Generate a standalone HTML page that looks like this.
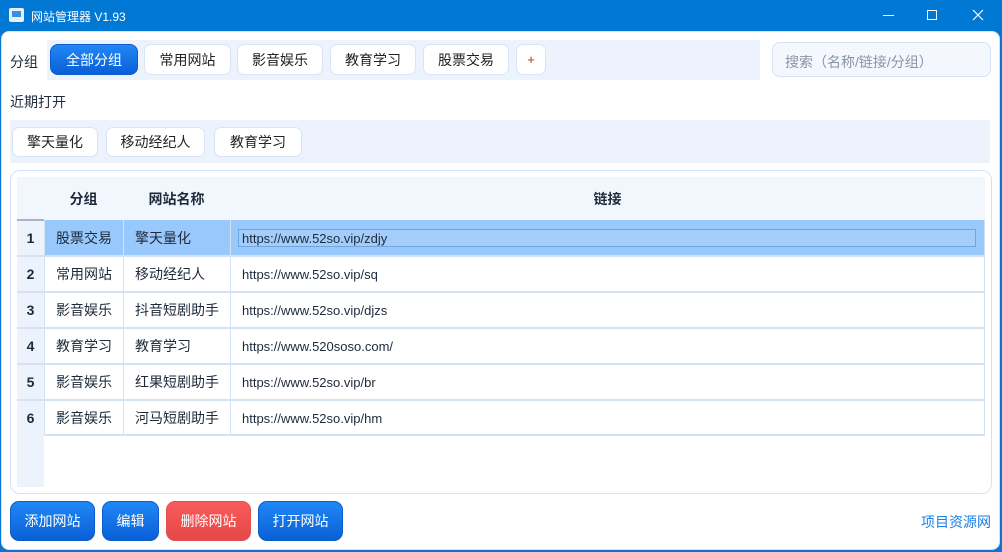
<!DOCTYPE html>
<html><head><meta charset="utf-8"><style>
*{box-sizing:border-box;margin:0;padding:0}
body{width:1002px;height:552px;background:#0b74d0;font-family:"Liberation Sans","Noto Sans CJK SC",sans-serif;font-size:14px;color:#1e2a3a;position:relative;overflow:hidden}
.abs{position:absolute}
.title{left:0;top:0;width:1002px;height:31px;background:#0078d4;color:#fff}
.main{left:1px;top:31px;width:999px;height:519px;background:#fff;border-radius:8px 8px 8px 8px;border:1px solid #d2e2f6}
.btn{position:absolute;background:#fff;border:1px solid #d8e4f4;border-radius:7px;display:flex;align-items:center;justify-content:center;font-size:14px;color:#222}
.strip{position:absolute;background:#edf3fc}
.pb{position:absolute;border-radius:9px;color:#fff;display:flex;align-items:center;justify-content:center;font-size:14px;background:linear-gradient(#2088f6,#0a5fd6);border:1px solid #0b5ccc}
.cell{position:absolute;display:flex;align-items:center;font-size:14px}
</style></head><body>
<div class="abs title">
 <div class="abs" style="left:9px;top:8px;width:15px;height:14px;background:#e8eef6;border-radius:2px"><div class="abs" style="left:3px;top:3px;width:9px;height:6px;background:#3a8ee0"></div></div>
 <div class="abs" style="left:31px;top:8px;font-size:12px">网站管理器 V1.93</div>
 <div class="abs" style="left:883px;top:15px;width:11px;height:1px;background:#fff"></div>
 <div class="abs" style="left:927px;top:10px;width:10px;height:10px;border:1px solid #fff"></div>
 <svg class="abs" style="left:972px;top:9px" width="12" height="12"><path d="M1 1L11 11M11 1L1 11" stroke="#fff" stroke-width="1.2"/></svg>
</div>
<div class="abs main"></div>
<div class="abs" style="left:10px;top:52px;font-size:14px">分组</div>
<div class="strip" style="left:47px;top:40px;width:713px;height:40px"></div>
<div class="pb" style="left:50px;top:44px;width:88px;height:31px;border-radius:8px">全部分组</div>
<div class="btn" style="left:144px;top:44px;width:87px;height:31px">常用网站</div>
<div class="btn" style="left:237px;top:44px;width:86px;height:31px">影音娱乐</div>
<div class="btn" style="left:330px;top:44px;width:86px;height:31px">教育学习</div>
<div class="btn" style="left:423px;top:44px;width:86px;height:31px">股票交易</div>
<div class="btn" style="left:516px;top:44px;width:30px;height:31px;font-size:13px;color:#b04000">+</div>
<div class="abs" style="left:772px;top:42px;width:219px;height:35px;background:#f4f8fe;border:1px solid #d4e2f4;border-radius:8px;color:#8a94a4;padding:9px 0 0 12px;font-size:14px">搜索（名称/链接/分组）</div>
<div class="abs" style="left:10px;top:92px;font-size:14px">近期打开</div>
<div class="strip" style="left:10px;top:120px;width:980px;height:43px"></div>
<div class="btn" style="left:12px;top:127px;width:86px;height:30px">擎天量化</div>
<div class="btn" style="left:106px;top:127px;width:99px;height:30px">移动经纪人</div>
<div class="btn" style="left:214px;top:127px;width:88px;height:30px">教育学习</div>
<div class="abs" style="left:10px;top:170px;width:982px;height:324px;border:1px solid #d2e2f6;border-radius:10px;background:#fff"></div>
<div class="abs" style="left:17px;top:177px;width:968px;height:43px;background:#f2f7fe"></div>
<div class="abs" style="left:17px;top:220px;width:27px;height:267px;background:#edf3fc"></div>
<div class="abs" style="left:17px;top:219px;width:27px;height:2px;background:#a8b4c4"></div>
<div class="cell" style="left:44px;top:177px;width:79px;height:43px;justify-content:center;font-weight:bold">分组</div>
<div class="cell" style="left:123px;top:177px;width:107px;height:43px;justify-content:center;font-weight:bold">网站名称</div>
<div class="cell" style="left:230px;top:177px;width:755px;height:43px;justify-content:center;font-weight:bold">链接</div>
<div class="pb" style="left:10px;top:501px;width:85px;height:40px">添加网站</div>
<div class="pb" style="left:102px;top:501px;width:57px;height:40px">编辑</div>
<div class="pb" style="left:166px;top:501px;width:85px;height:40px;background:linear-gradient(#fa5a5a,#e44848);border-color:#e25050">删除网站</div>
<div class="pb" style="left:258px;top:501px;width:85px;height:40px">打开网站</div>
<div class="abs" style="left:921px;top:512px;color:#1a7fe6;font-size:14px">项目资源网</div>
<div class="abs" style="left:44px;top:220px;width:941px;height:216px;border-bottom:2px solid #d4e2f4"></div>
<div class="abs" style="left:44px;top:220px;width:941px;height:36px;background:#99c8fc"></div>
<div class="abs" style="left:238px;top:229px;width:738px;height:18px;border:1px solid #6ea4e0;background:#a4cdfb"></div>
<div class="cell" style="left:17px;top:220px;width:27px;height:36px;justify-content:center;font-weight:bold">1</div><div class="cell" style="left:56px;top:220px;height:36px">股票交易</div><div class="cell" style="left:135px;top:220px;height:36px">擎天量化</div><div class="cell" style="left:242px;top:220px;height:36px;font-size:13px">https://www.52so.vip/zdjy</div>
<div class="cell" style="left:17px;top:256px;width:27px;height:36px;justify-content:center;font-weight:bold">2</div><div class="cell" style="left:56px;top:256px;height:36px">常用网站</div><div class="cell" style="left:135px;top:256px;height:36px">移动经纪人</div><div class="cell" style="left:242px;top:256px;height:36px;font-size:13px">https://www.52so.vip/sq</div>
<div class="cell" style="left:17px;top:292px;width:27px;height:36px;justify-content:center;font-weight:bold">3</div><div class="cell" style="left:56px;top:292px;height:36px">影音娱乐</div><div class="cell" style="left:135px;top:292px;height:36px">抖音短剧助手</div><div class="cell" style="left:242px;top:292px;height:36px;font-size:13px">https://www.52so.vip/djzs</div>
<div class="cell" style="left:17px;top:328px;width:27px;height:36px;justify-content:center;font-weight:bold">4</div><div class="cell" style="left:56px;top:328px;height:36px">教育学习</div><div class="cell" style="left:135px;top:328px;height:36px">教育学习</div><div class="cell" style="left:242px;top:328px;height:36px;font-size:13px">https://www.520soso.com/</div>
<div class="cell" style="left:17px;top:364px;width:27px;height:36px;justify-content:center;font-weight:bold">5</div><div class="cell" style="left:56px;top:364px;height:36px">影音娱乐</div><div class="cell" style="left:135px;top:364px;height:36px">红果短剧助手</div><div class="cell" style="left:242px;top:364px;height:36px;font-size:13px">https://www.52so.vip/br</div>
<div class="cell" style="left:17px;top:400px;width:27px;height:36px;justify-content:center;font-weight:bold">6</div><div class="cell" style="left:56px;top:400px;height:36px">影音娱乐</div><div class="cell" style="left:135px;top:400px;height:36px">河马短剧助手</div><div class="cell" style="left:242px;top:400px;height:36px;font-size:13px">https://www.52so.vip/hm</div>
<div class="abs" style="left:17px;top:255px;width:968px;height:2px;background:#d4e2f4"></div>
<div class="abs" style="left:17px;top:291px;width:968px;height:2px;background:#d4e2f4"></div>
<div class="abs" style="left:17px;top:327px;width:968px;height:2px;background:#d4e2f4"></div>
<div class="abs" style="left:17px;top:363px;width:968px;height:2px;background:#d4e2f4"></div>
<div class="abs" style="left:17px;top:399px;width:968px;height:2px;background:#d4e2f4"></div>
<div class="abs" style="left:123px;top:220px;width:1px;height:216px;background:#d4e2f4"></div>
<div class="abs" style="left:230px;top:220px;width:1px;height:216px;background:#d4e2f4"></div>
<div class="abs" style="left:984px;top:220px;width:1px;height:216px;background:#d4e2f4"></div>
<div class="abs" style="left:44px;top:220px;width:1px;height:216px;background:#d4e2f4"></div>
</body></html>
